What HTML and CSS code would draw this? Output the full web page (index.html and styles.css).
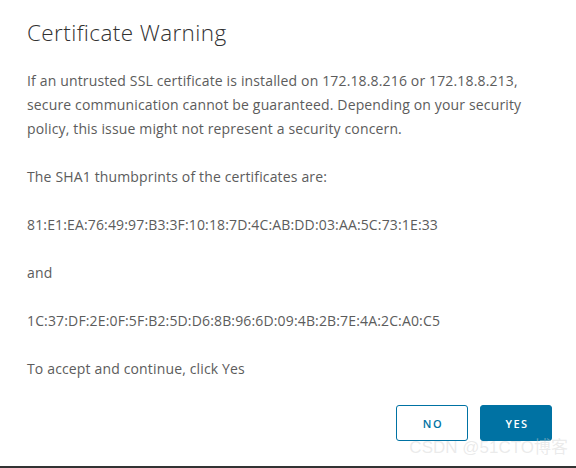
FILE: index.html
```html
<!DOCTYPE html>
<html>
<head>
<meta charset="utf-8">
<link rel="stylesheet" href="styles.css">
</head>
<body>
<div class="modal">
  <h1 class="title">Certificate Warning</h1>
  <div class="content">
    <p>If an untrusted SSL certificate is installed on 172.18.8.216 or 172.18.8.213,<br>secure communication cannot be guaranteed. Depending on your security<br>policy, this issue might not represent a security concern.</p>
    <p>The SHA1 thumbprints of the certificates are:</p>
    <p>81:E1:EA:76:49:97:B3:3F:10:18:7D:4C:AB:DD:03:AA:5C:73:1E:33</p>
    <p>and</p>
    <p>1C:37:DF:2E:0F:5F:B2:5D:D6:8B:96:6D:09:4B:2B:7E:4A:2C:A0:C5</p>
    <p>To accept and continue, click Yes</p>
  </div>
  <div class="footer">
    <button class="btn btn-outline">NO</button>
    <button class="btn btn-primary">YES</button>
  </div>
  <div class="watermark">CSDN @51CTO博客</div>
</div>
<div class="strip"></div>
</body>
</html>
```
FILE: styles.css
```css
html, body {
  margin: 0;
  padding: 0;
  background: #ffffff;
}
body {
  width: 576px;
  height: 468px;
  overflow: hidden;
  font-family: "Open Sans", sans-serif;
}
.modal {
  position: relative;
  height: 466px;
  box-sizing: border-box;
  padding: 19px 24px 0 27px;
  display: flex;
  flex-direction: column;
  background: #fff;
}
.title {
  margin: 0;
  font-size: 22.5px;
  line-height: 28px;
  font-weight: 300;
  color: #313131;
  letter-spacing: 0.4px;
}
.content {
  margin-top: 22px;
  color: #5c5c5c;
  font-size: 14px;
  line-height: 24px;
  letter-spacing: 0.15px;
}
.content p {
  margin: 0 0 24px 0;
}
.content p:last-child {
  margin-bottom: 0;
}
.footer {
  display: flex;
  justify-content: flex-end;
  gap: 12px;
  margin-top: 24px;
}
.btn {
  height: 36px;
  width: 72px;
  box-sizing: border-box;
  border-radius: 3px;
  font-family: "Open Sans", sans-serif;
  font-size: 11px;
  font-weight: 600;
  letter-spacing: 1.5px;
  padding: 0 0 0 2px;
}
.btn-outline {
  background: #fff;
  border: 1px solid #0072a3;
  color: #0072a3;
}
.btn-primary {
  background: #0072a3;
  border: 1px solid #0072a3;
  color: #fff;
}
.watermark {
  position: absolute;
  right: 8px;
  bottom: 8px;
  font-family: "Liberation Sans", "Noto Sans CJK SC", sans-serif;
  font-size: 17px;
  color: rgba(210, 210, 210, 0.45);
  pointer-events: none;
}
.strip {
  height: 2px;
  background: #333;
}
```
